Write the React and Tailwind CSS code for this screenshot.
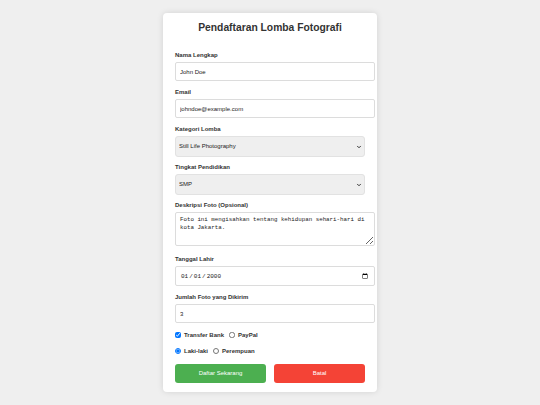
import { useState } from "react";
import { ChevronDown } from "lucide-react";

/*
  Formulir pendaftaran lomba fotografi — kartu tunggal di tengah halaman.
*/

const inputCls =
  "box-content w-full px-[4px] border border-[#dcdcdc] rounded-[2px] bg-white text-[6px] text-[#222] outline-none";

function Field({ label, children, className = "" }) {
  return (
    <div className={`flex flex-col ${className}`}>
      <label className="mb-[3px] h-[8px] text-[6px] font-bold leading-[8px] text-[#333]">{label}</label>
      {children}
    </div>
  );
}

// Select dengan panah kecil sendiri (panah bawaan browser terlalu besar untuk ukuran ini).
function Select({ value, onChange, options }) {
  return (
    <div className="relative h-[21px]">
      <select
        className="block h-[21px] w-full appearance-none rounded-[3px] border border-[#e2e2e2] bg-[#efefef] px-[3px] text-[6px] leading-[19px] text-[#222] outline-none"
        value={value}
        onChange={onChange}
      >
        {options.map((o) => (
          <option key={o}>{o}</option>
        ))}
      </select>
      <ChevronDown
        size={6}
        strokeWidth={4}
        className="pointer-events-none absolute right-[3px] top-[8px] text-[#333]"
      />
    </div>
  );
}

export default function App() {
  const [form, setForm] = useState({
    nama: "John Doe",
    email: "johndoe@example.com",
    kategori: "Still Life Photography",
    pendidikan: "SMP",
    deskripsi: "Foto ini mengisahkan tentang kehidupan sehari-hari di kota Jakarta.",
    lahir: "2000-01-01",
    jumlah: 3,
    bank: true,
    paypal: false,
    gender: "L",
  });
  const set = (k) => (e) =>
    setForm({ ...form, [k]: e.target.type === "checkbox" ? e.target.checked : e.target.value });

  return (
    <div className="min-h-[405px] bg-[#efefef] pt-[13px] font-['Liberation_Sans',Arial,sans-serif]">
      <form className="mx-auto w-[214px] rounded-[4px] bg-white px-[12px] pt-[8px] pb-[9px] shadow-[0_0_6px_rgba(0,0,0,0.12)]">
        <h2 className="h-[14px] text-center text-[10.3px] font-bold leading-[14px] text-[#333]">
          Pendaftaran Lomba Fotografi
        </h2>

        <Field label="Nama Lengkap" className="mt-[16px]">
          <input className={`${inputCls} h-[17px]`} value={form.nama} onChange={set("nama")} />
        </Field>

        <Field label="Email" className="mt-[7px]">
          <input type="email" className={`${inputCls} h-[17px]`} value={form.email} onChange={set("email")} />
        </Field>

        <Field label="Kategori Lomba" className="mt-[7px]">
          <Select
            value={form.kategori}
            onChange={set("kategori")}
            options={["Landscape Photography", "Portrait Photography", "Still Life Photography"]}
          />
        </Field>

        <Field label="Tingkat Pendidikan" className="mt-[6px]">
          <Select value={form.pendidikan} onChange={set("pendidikan")} options={["SD", "SMP", "SMA"]} />
        </Field>

        <Field label="Deskripsi Foto (Opsional)" className="mt-[6px]">
          <textarea
            className="box-content block h-[26px] w-full rounded-[2px] border border-[#dcdcdc] px-[4px] py-[3px] font-['Liberation_Mono',monospace] text-[5.8px] leading-[8px] text-[#222] outline-none"
            value={form.deskripsi}
            onChange={set("deskripsi")}
          />
        </Field>

        <Field label="Tanggal Lahir" className="mt-[9px]">
          <input
            type="date"
            className={`${inputCls} h-[18px] font-['Liberation_Mono',monospace]`}
            value={form.lahir}
            onChange={set("lahir")}
          />
        </Field>

        <Field label="Jumlah Foto yang Dikirim" className="mt-[7px]">
          <input type="number" className={`${inputCls} h-[17px]`} value={form.jumlah} onChange={set("jumlah")} />
        </Field>

        <div className="mt-[8px] flex h-[8px] items-center text-[6px] font-bold text-[#333]">
          <label className="flex items-center gap-[3px]">
            <input type="checkbox" className="m-0 h-[6px] w-[6px]" checked={form.bank} onChange={set("bank")} />
            Transfer Bank
          </label>
          <label className="ml-[5px] flex items-center gap-[3px]">
            <input type="checkbox" className="m-0 h-[6px] w-[6px]" checked={form.paypal} onChange={set("paypal")} />
            PayPal
          </label>
        </div>

        <div className="mt-[8px] flex h-[8px] items-center text-[6px] font-bold text-[#333]">
          <label className="flex items-center gap-[3px]">
            <input
              type="radio"
              name="gender"
              className="m-0 h-[6px] w-[6px]"
              checked={form.gender === "L"}
              onChange={() => setForm({ ...form, gender: "L" })}
            />
            Laki-laki
          </label>
          <label className="ml-[5px] flex items-center gap-[3px]">
            <input
              type="radio"
              name="gender"
              className="m-0 h-[6px] w-[6px]"
              checked={form.gender === "P"}
              onChange={() => setForm({ ...form, gender: "P" })}
            />
            Perempuan
          </label>
        </div>

        <div className="mt-[9px] flex gap-[8px]">
          <button type="submit" className="h-[19px] flex-1 rounded-[3px] bg-[#4caf50] text-[6px] text-white">
            Daftar Sekarang
          </button>
          <button type="reset" className="h-[19px] flex-1 rounded-[3px] bg-[#f44336] text-[6px] text-white">
            Batal
          </button>
        </div>
      </form>
    </div>
  );
}
